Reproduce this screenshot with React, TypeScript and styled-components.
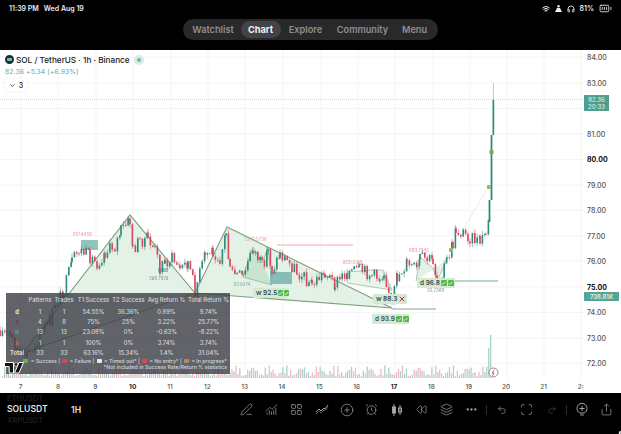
import {FunctionComponent, ReactNode} from "react";
import styled, {createGlobalStyle} from "styled-components";
import {
  AlarmClock,
  BatteryFull,
  ChartNoAxesCombined,
  Check,
  ChevronDown,
  CirclePlus,
  Ellipsis,
  Headphones,
  Layers,
  LayoutGrid,
  PenLine,
  Redo2,
  Rewind,
  Scan,
  Share,
  Undo2,
  Wifi,
  X,
} from "lucide-react";

const GlobalStyle = createGlobalStyle`
  html, body {
    margin: 0;
    padding: 0;
    background: #000;
    font-family: Inter, "Liberation Sans", sans-serif;
  }
`;

const Page = styled.div`
  width: 621px;
  height: 434px;
  display: flex;
  flex-direction: column;
  overflow: hidden;
  background: #000;
`;

const Header = styled.header`
  height: 50px;
  flex: none;
  display: flex;
  flex-direction: column;
  color: #eee;
`;

const StatusBar = styled.div`
  height: 17px;
  padding: 0 9px;
  display: flex;
  align-items: center;
  justify-content: space-between;
  font-size: 7px;
  font-weight: 600;
`;

const StatusGroup = styled.div`
  display: flex;
  align-items: center;
  gap: 5px;
`;

const NavRow = styled.nav`
  display: flex;
  justify-content: center;
  padding: 2px 0 0 0;
`;

const NavPill = styled.div`
  width: 255px;
  height: 21px;
  margin-left: -1px;
  padding: 0 3px;
  box-sizing: border-box;
  display: flex;
  align-items: center;
  border-radius: 11px;
  background: #29292b;
`;

const NavItem = styled.div<{$active?: boolean; $width: number}>`
  width: ${(p) => p.$width}px;
  height: 17px;
  line-height: 17px;
  flex: none;
  text-align: center;
  font-size: 9.2px;
  font-weight: ${(p) => (p.$active ? 700 : 600)};
  color: ${(p) => (p.$active ? "#f2f2f2" : "#8f8f92")};
  background: ${(p) => (p.$active ? "#434345" : "transparent")};
  border-radius: 9px;
`;

const ChartArea = styled.main`
  position: relative;
  height: 343px;
  flex: none;
  display: flex;
  background: #fff;
  overflow: hidden;
`;

const Plot = styled.div`
  width: 584px;
  flex: none;
  display: flex;
  flex-direction: column;
`;

const PlotCanvas = styled.svg`
  display: block;
  width: 584px;
  height: 330px;
  filter: blur(0.3px);
`;

const TimeAxis = styled.div`
  height: 13px;
  padding-left: 2px;
  display: flex;
  align-items: center;
`;

const TimeLabel = styled.span<{$bold?: boolean}>`
  width: 37.35px;
  flex: none;
  text-align: center;
  font-size: 6.5px;
  font-weight: ${(p) => (p.$bold ? 700 : 500)};
  color: ${(p) => (p.$bold ? "#222" : "#555")};
`;

const PriceAxis = styled.div`
  flex: 1;
  padding: 1px 0 0 3px;
  display: flex;
  flex-direction: column;
`;

const PriceLabel = styled.span<{$bold?: boolean}>`
  height: 25.5px;
  line-height: 13px;
  flex: none;
  font-size: 7px;
  font-weight: ${(p) => (p.$bold ? 700 : 500)};
  color: ${(p) => (p.$bold ? "#111" : "#555")};
`;

const LastPriceBadge = styled.div`
  position: absolute;
  left: 584px;
  top: 45px;
  width: 25px;
  height: 16px;
  display: flex;
  flex-direction: column;
  align-items: center;
  justify-content: center;
  background: #4f9f8e;
  color: #d8efe9;
  font-size: 6px;
  font-weight: 500;
  line-height: 7px;
`;

const VolumeBadge = styled.div`
  position: absolute;
  left: 584px;
  top: 242px;
  width: 35px;
  height: 9px;
  line-height: 9px;
  text-align: center;
  background: #55a595;
  color: #e4f3ef;
  font-size: 6px;
  font-weight: 600;
`;

const Legend = styled.div`
  position: absolute;
  left: 5px;
  top: 4px;
  color: #222;
`;

const TitleRow = styled.div`
  display: flex;
  align-items: center;
  gap: 2px;
  height: 11px;
  font-size: 8.2px;
  font-weight: 500;
`;

const CoinDot = styled.span`
  width: 9px;
  height: 9px;
  border-radius: 50%;
  background: #1f2a3a;
  border: 2px solid #1f2a3a;
  box-sizing: border-box;
  background-image: linear-gradient(#6fc2b0, #6fc2b0);
  background-size: 5px 3px;
  background-repeat: no-repeat;
  background-position: center;
`;

const LiveDot = styled.span`
  width: 4px;
  height: 4px;
  margin-left: 5px;
  border-radius: 50%;
  background: #6db7a4;
  box-shadow: 0 0 0 3px #d7ece6;
`;

const QuoteRow = styled.div`
  margin-top: 1px;
  height: 11px;
  line-height: 11px;
  font-size: 6.8px;
  color: #63ab9b;
  letter-spacing: 0.1px;
`;

const CollapseChip = styled.div`
  margin-top: 2px;
  width: 22px;
  height: 12px;
  display: flex;
  align-items: center;
  justify-content: center;
  gap: 3px;
  border-radius: 2px;
  background: #fff;
  box-shadow: 0 0 2px #0002;
  font-size: 7px;
  font-weight: 500;
`;

const StatsPanel = styled.div`
  position: absolute;
  left: 6px;
  top: 243px;
  width: 224px;
  height: 81px;
  background: rgba(62, 65, 72, 0.82);
  color: #d6d7da;
  font-size: 5.8px;
  font-weight: 500;
  overflow: hidden;
`;

const StatsRow = styled.div<{$height: number}>`
  height: ${(p) => p.$height}px;
  display: grid;
  grid-template-columns: 22px 24px 24px 35px 35px 41px 43px;
  align-items: center;
  text-align: center;
  white-space: nowrap;
`;

const PatternMark = styled.span<{$color: string}>`
  font-weight: 700;
  color: ${(p) => p.$color};
`;

const StatsFoot = styled.div`
  margin-top: 1px;
  padding-right: 3px;
  text-align: right;
  font-size: 5.2px;
  line-height: 5.6px;
  white-space: nowrap;
`;

const FootMark = styled.span<{$color: string}>`
  display: inline-block;
  width: 5px;
  height: 4px;
  margin: 0 1px;
  border-radius: 1px;
  background: ${(p) => p.$color};
`;

const TvLogo = styled.svg`
  position: absolute;
  left: 4px;
  top: 311px;
  width: 20px;
  height: 13px;
`;

const PatternTag = styled.div<{$x: number; $y: number; $w: number}>`
  position: absolute;
  left: ${(p) => p.$x}px;
  top: ${(p) => p.$y}px;
  width: ${(p) => p.$w}px;
  height: 10px;
  padding-left: 3px;
  box-sizing: border-box;
  display: flex;
  align-items: center;
  gap: 1px;
  white-space: nowrap;
  background: #d5ead3;
  color: #3b4a58;
  font-size: 6.5px;
  font-weight: 600;
`;

const CheckBox = styled.span`
  width: 6px;
  height: 6px;
  display: flex;
  align-items: center;
  justify-content: center;
  border-radius: 1px;
  background: #58b84f;
  color: #fff;
`;

const Toolbar = styled.footer`
  position: relative;
  flex: 1;
  padding: 0 2px 15px 7px;
  display: flex;
  align-items: center;
  color: #e4e4e4;
`;

const SymbolSlot = styled.div`
  width: 64px;
  display: flex;
  flex-direction: column;
  font-size: 8.6px;
  font-weight: 600;
  line-height: 11px;
`;

const GhostSymbol = styled.span`
  color: #1c1c1c;
  font-size: 7.6px;
`;

const Interval = styled.span`
  font-size: 8.6px;
  font-weight: 600;
`;

const Tools = styled.div`
  margin-left: auto;
  display: flex;
  align-items: center;
  color: #a5a5a5;
`;

const ToolSlot = styled.span<{$dim?: boolean}>`
  width: 25px;
  display: flex;
  justify-content: center;
  color: ${(p) => (p.$dim ? "#4a4a4a" : "inherit")};
`;

const ToolDivider = styled.span`
  width: 1px;
  height: 10px;
  margin: 0 2px;
  background: #2c2c2c;
`;

const CornerArc = styled.svg`
  position: absolute;
  right: 0;
  bottom: 0;
  width: 12px;
  height: 12px;
`;

// screenshot coordinates of the price path; candles get jitter around it
const pricePath: [number, number][] = [
  [0, 330], [10, 336], [22, 356], [30, 352], [40, 335], [50, 320], [58, 300], [64, 290],
  [72, 262], [79, 250], [90, 256], [97, 263], [105, 252], [115, 246], [121, 230], [130, 221],
  [133, 250], [140, 240], [148, 238], [155, 250], [160, 268], [165, 262], [172, 258], [180, 268],
  [188, 262], [195, 290], [205, 255], [213, 250], [220, 258], [226, 232], [230, 272], [243, 277],
  [253, 248], [262, 266], [268, 250], [272, 270], [280, 254], [297, 270], [312, 284], [325, 272],
  [335, 283], [347, 272], [360, 270], [380, 278], [384, 270], [392, 305], [397, 277], [407, 263],
  [417, 270], [420, 258], [433, 260], [437, 280], [447, 260], [453, 244], [456, 230], [470, 236],
  [480, 242], [486, 232], [489, 222],
];

interface Candle {
  x: number;
  open: number;
  close: number;
  high: number;
  low: number;
}

const buildCandles = (): Candle[] => {
  let seed = 17;
  const rand = () => {
    seed = (seed * 9301 + 49297) % 233280;
    return seed / 233280;
  };
  const candles: Candle[] = [];
  let previous = pricePath[0][1];
  for (let i = 0; i < pricePath.length - 1; i++) {
    const [x1, y1] = pricePath[i];
    const [x2, y2] = pricePath[i + 1];
    for (let x = x1; x < x2; x += 2.4) {
      const t = (x - x1) / (x2 - x1);
      const close = y1 + (y2 - y1) * t + (rand() - 0.45) * 14;
      candles.push({
        x,
        open: previous,
        close,
        high: Math.min(previous, close) - rand() * 4,
        low: Math.max(previous, close) + rand() * 4,
      });
      previous = close;
    }
  }
  return candles;
};

const candles = buildCandles();

const volumes = Array.from({length: 250}, (_, i) => {
  const x = 2 + i * 1.96;
  const wave = Math.abs(Math.sin(i * 1.7) * Math.cos(i * 0.37));
  let h = 2 + wave * 11;
  if (x > 487 && x < 490) h = 30;
  if (x >= 490 && x < 492) h = 43;
  if (x >= 492) h = 82;
  return {x, h, up: Math.sin(i * 2.3) > 0 || x > 486};
});

const priceGrid = [57, 83, 108.5, 134, 159.5, 185, 210, 236, 261, 287, 312.5, 338, 363];
const dayGrid = [21, 58, 96, 133, 171, 208, 245, 283, 321, 358, 395, 433, 470, 507, 544, 581];

const chartNotes = [
  {x: 73, y: 236, text: "617.4459", color: "#e88b97"},
  {x: 149, y: 280, text: "386.7978", color: "#7c9a92"},
  {x: 234, y: 286, text: "67.0074", color: "#7c9a92"},
  {x: 244, y: 241, text: "1.272.5736", color: "#e88b97"},
  {x: 343, y: 264, text: "813.0589", color: "#e88b97"},
  {x: 409, y: 252, text: "693.7245", color: "#e88b97"},
  {x: 427, y: 292, text: "32.7369", color: "#7c9a92"},
];

const ChartDrawing: FunctionComponent = () => (
  <PlotCanvas viewBox="0 50 584 330">
    {priceGrid.map((y) => (
      <line key={y} x1={0} x2={584} y1={y} y2={y} stroke="#f4f5f6" strokeWidth={1} />
    ))}
    {dayGrid.map((x) => (
      <line key={x} x1={x} x2={x} y1={50} y2={380} stroke="#f4f5f6" strokeWidth={1} />
    ))}
    <line x1={0} x2={584} y1={99.5} y2={99.5} stroke="#c7d9d4" strokeWidth={1} strokeDasharray="1 1" />

    <polygon points="23,353 130,215 195,293" fill="#e4f1e6" />
    <polygon points="195,293 227,227 392,308" fill="#e4f1e6" />
    <polyline points="23,353 130,215 195,293 227,227 392,308 195,293 23,353" fill="none" stroke="#7f9f7d" strokeWidth={1.1} />
    <polygon points="243,277 253,247 262,263 272,285" fill="#c9e4cf" />
    <polyline points="243,277 253,247 262,263 268,248 272,285 243,277" fill="none" stroke="#7fb08a" strokeWidth={0.7} />
    <polyline points="347,272 372,270 383,270 392,290 347,283" fill="#e9f4ea" stroke="#8db493" strokeWidth={0.7} />
    <polyline points="416,281 420,257 433,268 437,281 447,260" fill="#e4f1e6" stroke="#8db493" strokeWidth={0.7} />
    <line x1={462} y1={231} x2={489} y2={186} stroke="#dfe9e3" strokeWidth={0.8} />

    <rect x={81} y={240} width={17} height={10} fill="#8fc5bb" />
    <rect x={270} y={272} width={22} height={12} fill="#86bdb6" />
    <rect x={158} y={268} width={10} height={4} fill="#8fc5bb" />
    <line x1={277} x2={353} y1={245} y2={245} stroke="#e9a2a6" strokeWidth={0.9} />
    <line x1={392} x2={436} y1={309} y2={309} stroke="#86a58c" strokeWidth={1} />
    <line x1={437} x2={498} y1={281} y2={281} stroke="#70a89a" strokeWidth={1} />

    {volumes.map((v) => (
      <rect
        key={v.x}
        x={v.x}
        y={378 - v.h}
        width={1.3}
        height={v.h}
        fill={v.up ? "#a8d3ca" : "#f0bcc2"}
      />
    ))}

    {candles.map((c) => {
      const color = c.close < c.open ? "#2f8c7a" : "#d8495f";
      return (
        <g key={c.x}>
          <line x1={c.x} x2={c.x} y1={c.high} y2={c.low} stroke={color} strokeWidth={0.5} />
          <rect
            x={c.x - 0.8}
            y={Math.min(c.open, c.close)}
            width={1.6}
            height={Math.max(Math.abs(c.close - c.open), 0.8)}
            fill={color}
          />
        </g>
      );
    })}

    <rect x={488.6} y={200} width={1.8} height={22} fill="#2f8c7a" />
    <rect x={490.6} y={135} width={1.8} height={65} fill="#2f8c7a" />
    <rect x={492.5} y={100} width={1.7} height={35} fill="#2f8c7a" />
    <line x1={493.4} x2={493.4} y1={83} y2={100} stroke="#8fb6ad" strokeWidth={0.7} />

    <rect x={487} y={185} width={4} height={4} rx={1} fill="#8dbb73" />
    <rect x={489.5} y={150} width={4} height={4} rx={1} fill="#6ea85a" />
    <rect x={449} y={248} width={4} height={4} rx={1} fill="#8dbb73" />

    {chartNotes.map((n) => (
      <text key={n.text} x={n.x} y={n.y} fontSize={4.4} fill={n.color}>
        {n.text}
      </text>
    ))}

    <circle cx={493.5} cy={372.5} r={4.5} fill="#fff" stroke="#a0558f" strokeWidth={0.8} />
    <path d="M494.5 369.5 L492 373 H494 L492.7 375.8" fill="none" stroke="#c0392b" strokeWidth={0.8} />
  </PlotCanvas>
);

const statsRows = [
  {mark: "d", color: "#e8e8e8", cells: ["1", "1", "54.55%", "36.36%", "0.89%", "9.74%"]},
  {mark: "s", color: "#7a3b3f", cells: ["4", "8", "75%", "25%", "3.22%", "25.77%"]},
  {mark: "n", color: "#4fa3c7", cells: ["13", "13", "23.08%", "0%", "-0.63%", "-8.22%"]},
  {mark: "x", color: "#c9694a", cells: ["1", "1", "100%", "0%", "3.74%", "3.74%"]},
  {mark: "Total", color: "#d6d7da", cells: ["33", "33", "63.16%", "15.34%", "1.4%", "31.04%"]},
];

const StatsTable: FunctionComponent = () => (
  <StatsPanel>
    <StatsRow $height={13}>
      <span />
      <span>Patterns</span>
      <span>Trades</span>
      <span>T1 Success</span>
      <span>T2 Success</span>
      <span>Avg Return %</span>
      <span>Total Return %</span>
    </StatsRow>
    {statsRows.map((row) => (
      <StatsRow key={row.mark} $height={10.4}>
        <PatternMark $color={row.color}>{row.mark}</PatternMark>
        {row.cells.map((cell, i) => (
          <span key={i}>{cell}</span>
        ))}
      </StatsRow>
    ))}
    <StatsFoot>
      <FootMark $color="#58b84f" /> = Success | <FootMark $color="#d9475c" /> = Failure |{" "}
      <FootMark $color="#e8e8e8" /> = Timed out* | <FootMark $color="#d9475c" /> = No entry* |{" "}
      <FootMark $color="#b98a55" /> = In progress*
      <br />
      *Not included in Success Rate/Return % statistics
    </StatsFoot>
  </StatsPanel>
);

interface TagProps {
  x: number;
  y: number;
  w: number;
  label: string;
  failed?: boolean;
}

const Tag: FunctionComponent<TagProps> = ({x, y, w, label, failed}) => (
  <PatternTag $x={x} $y={y} $w={w}>
    {label}
    {failed ? (
      <X size={8} color="#c8303c" strokeWidth={3} />
    ) : (
      <>
        <CheckBox>
          <Check size={5} strokeWidth={4} />
        </CheckBox>
        <CheckBox>
          <Check size={5} strokeWidth={4} />
        </CheckBox>
      </>
    )}
  </PatternTag>
);

const ToolIcon: FunctionComponent<{children: ReactNode; dim?: boolean}> = ({children, dim}) => (
  <ToolSlot $dim={dim}>{children}</ToolSlot>
);

const PatternToolIcon = () => (
  <svg width="14" height="13" viewBox="0 0 14 13" fill="none" stroke="currentColor" strokeWidth="1">
    <path d="M1 9l3-3 2 2 3-3 1 1 3-4" />
    <path d="M1 11l3-3 2 2 3-3 1 1 3-4" strokeDasharray="1 1" />
  </svg>
);

const CandlesIcon = () => (
  <svg width="12" height="14" viewBox="0 0 12 14" fill="none" stroke="currentColor" strokeWidth="1">
    <path d="M3 1v12M9 2v10" />
    <rect x="1.5" y="4" width="3" height="6" fill="currentColor" />
    <rect x="7.5" y="5" width="3" height="4" />
  </svg>
);

const BulbPlusIcon = () => (
  <svg width="14" height="15" viewBox="0 0 14 15" fill="none" stroke="currentColor" strokeWidth="1">
    <path d="M4.8 11C3 9.9 2 8.3 2 6.4a5 5 0 0 1 10 0c0 1.9-1 3.5-2.8 4.6z" />
    <path d="M7 4v5M4.5 6.5h5M5.3 13h3.4" />
  </svg>
);

const App: FunctionComponent = () => {
  const s = 13;
  return (
    <Page>
      <GlobalStyle />
      <Header>
        <StatusBar>
          <StatusGroup>
            <span>11:39 PM</span>
            <span>Wed Aug 19</span>
          </StatusGroup>
          <StatusGroup>
            <Wifi size={8} strokeWidth={3} />
            <svg width="7" height="7" viewBox="0 0 7 7" fill="currentColor">
              <circle cx="3.5" cy="1.3" r="1.2" />
              <path d="M0 7l2-4h3l2 4z" />
            </svg>
            <Headphones size={8} strokeWidth={2.5} />
            <span>81%</span>
            <BatteryFull size={13} strokeWidth={1.6} />
          </StatusGroup>
        </StatusBar>
        <NavRow>
          <NavPill>
            <NavItem $width={55}>Watchlist</NavItem>
            <NavItem $width={40} $active>
              Chart
            </NavItem>
            <NavItem $width={50}>Explore</NavItem>
            <NavItem $width={64}>Community</NavItem>
            <NavItem $width={40}>Menu</NavItem>
          </NavPill>
        </NavRow>
      </Header>

      <ChartArea>
        <Plot>
          <ChartDrawing />
          <TimeAxis>
            {["7", "8", "9", "10", "11", "12", "13", "14", "15", "16", "17", "18", "19", "20", "21", "2:"].map((day) => (
              <TimeLabel key={day} $bold={day === "10" || day === "17"}>
                {day}
              </TimeLabel>
            ))}
          </TimeAxis>
        </Plot>
        <PriceAxis>
          {["84.00", "83.00", "", "81.00", "80.00", "79.00", "78.00", "77.00", "76.00", "75.00", "74.00", "73.00", "72.00"].map((price, i) => (
            <PriceLabel key={i} $bold={price === "80.00" || price === "75.00"}>
              {price}
            </PriceLabel>
          ))}
        </PriceAxis>

        <LastPriceBadge>
          <span>82.36</span>
          <span>20:33</span>
        </LastPriceBadge>
        <VolumeBadge>738.81K</VolumeBadge>

        <Legend>
          <TitleRow>
            <CoinDot />
            SOL / TetherUS · 1h · Binance
            <LiveDot />
          </TitleRow>
          <QuoteRow>82.36 +5.34 (+6.93%)</QuoteRow>
          <CollapseChip>
            <ChevronDown size={7} strokeWidth={2.5} />3
          </CollapseChip>
        </Legend>

        <StatsTable />
        <TvLogo viewBox="0 0 20 13">
          <path d="M0.5 1.5h9v10.5H5.2V5.6H0.5z" fill="#111" stroke="#fff" strokeWidth="1" />
          <circle cx="12" cy="3.4" r="1.8" fill="#111" stroke="#fff" strokeWidth="0.7" />
          <path d="M15 1.5h4.5L15 12h-4.5z" fill="#111" stroke="#fff" strokeWidth="1" />
        </TvLogo>

        <Tag x={253} y={238} w={35} label="w 92.5" />
        <Tag x={373} y={244} w={34} label="w 88.3" failed />
        <Tag x={372} y={264} w={37} label="d 93.9" />
        <Tag x={417} y={228} w={38} label="d 96.8" />
      </ChartArea>

      <Toolbar>
        <SymbolSlot>
          <GhostSymbol>ETHUSDT</GhostSymbol>
          <span>SOLUSDT</span>
          <GhostSymbol>XRPUSDT</GhostSymbol>
        </SymbolSlot>
        <Interval>1H</Interval>
        <Tools>
          <ToolIcon><PenLine size={s} strokeWidth={1.3} /></ToolIcon>
          <ToolIcon><ChartNoAxesCombined size={s} strokeWidth={1.3} /></ToolIcon>
          <ToolIcon><LayoutGrid size={s} strokeWidth={1.3} /></ToolIcon>
          <ToolIcon><PatternToolIcon /></ToolIcon>
          <ToolIcon><CirclePlus size={s + 1} strokeWidth={1.2} /></ToolIcon>
          <ToolIcon><AlarmClock size={s} strokeWidth={1.3} /></ToolIcon>
          <ToolIcon><CandlesIcon /></ToolIcon>
          <ToolIcon><Rewind size={11} strokeWidth={1.4} /></ToolIcon>
          <ToolIcon><Layers size={s} strokeWidth={1.3} /></ToolIcon>
          <ToolIcon><Ellipsis size={s} strokeWidth={2.2} /></ToolIcon>
          <ToolDivider />
          <ToolIcon><Undo2 size={10} strokeWidth={1.5} /></ToolIcon>
          <ToolIcon><Scan size={s} strokeWidth={1.4} /></ToolIcon>
          <ToolIcon dim><Redo2 size={10} strokeWidth={1.5} /></ToolIcon>
          <ToolDivider />
          <ToolIcon><BulbPlusIcon /></ToolIcon>
          <ToolIcon><Share size={s} strokeWidth={1.3} /></ToolIcon>
        </Tools>
        <CornerArc viewBox="0 0 12 12">
          <path d="M11 3C10.6 7 7.5 10 3 10.6" fill="none" stroke="#eee" strokeWidth="1.8" strokeLinecap="round" />
        </CornerArc>
      </Toolbar>
    </Page>
  );
};

export default App;
